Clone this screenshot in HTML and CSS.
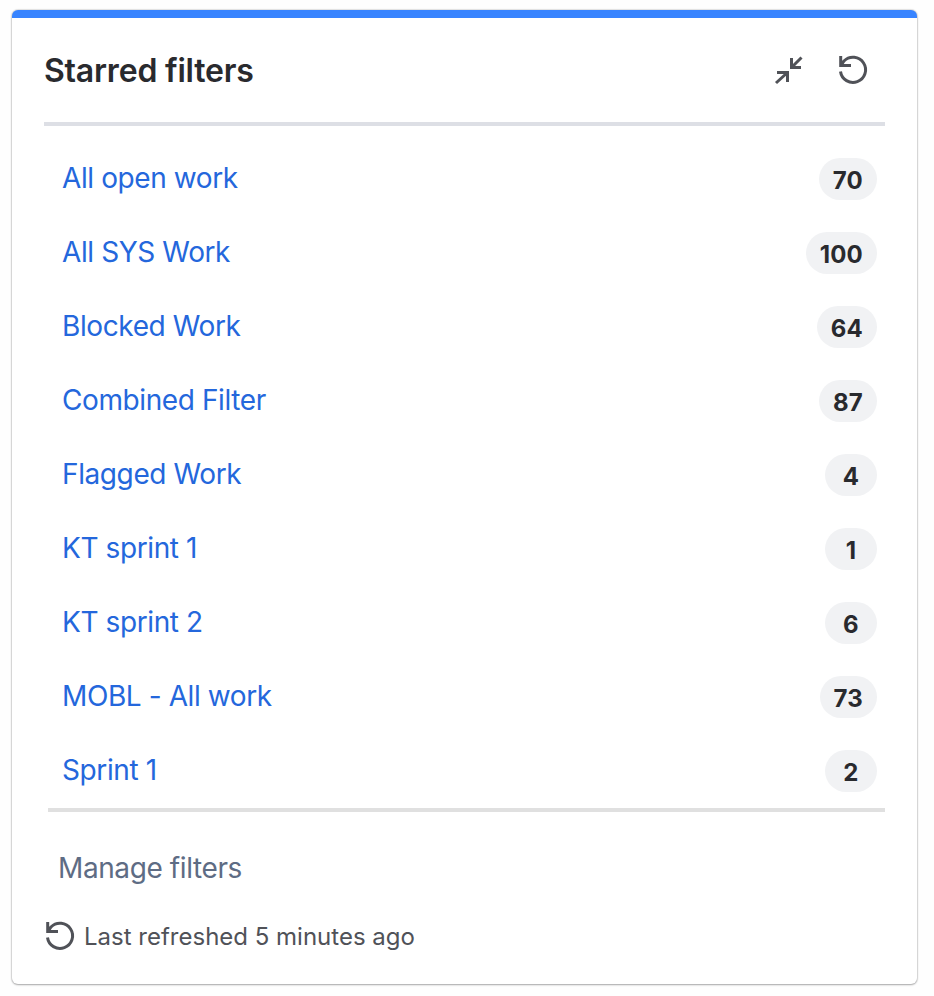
FILE: index.html
```html
<!DOCTYPE html>
<html lang="en">
<head>
    <meta charset="UTF-8">
    <meta name="viewport" content="width=device-width, initial-scale=1.0">
    <link rel="stylesheet" href="styles.css">
    <title>Starred filters</title>
</head>
<body>
    <div class="gadget">
        <div class="header">
            <h1>Starred filters</h1>
            <div class="actions">
                <svg class="icon" viewBox="0 0 32 32">
                    <path d="M18.5 4v9.5H28M18.5 13.5L28.5 3.5" />
                    <path d="M4 18.5h10.5V28M14.5 18.5L3 29" />
                </svg>
                <svg class="icon" viewBox="0 0 32 32">
                    <path d="M3.7 2v9.5H14M4 11.5L7 7A12.6 12.6 0 1 1 3.5 17.5" />
                </svg>
            </div>
        </div>
        <div class="list">
            <div class="row"><a class="name">All open work</a><span class="count">70</span></div>
            <div class="row"><a class="name">All SYS Work</a><span class="count">100</span></div>
            <div class="row"><a class="name">Blocked Work</a><span class="count">64</span></div>
            <div class="row"><a class="name">Combined Filter</a><span class="count">87</span></div>
            <div class="row"><a class="name">Flagged Work</a><span class="count">4</span></div>
            <div class="row"><a class="name">KT sprint 1</a><span class="count">1</span></div>
            <div class="row"><a class="name">KT sprint 2</a><span class="count">6</span></div>
            <div class="row"><a class="name">MOBL - All work</a><span class="count">73</span></div>
            <div class="row"><a class="name">Sprint 1</a><span class="count">2</span></div>
        </div>
        <a class="manage">Manage filters</a>
        <div class="refreshed">
            <svg class="icon" viewBox="0 0 32 32">
                <path d="M3.7 2v9.5H14M4 11.5L7 7A12.6 12.6 0 1 1 3.5 17.5" />
            </svg>
            <span>Last refreshed 5 minutes ago</span>
        </div>
    </div>
</body>
</html>
```

FILE: styles.css
```css
body {
    margin: 0;
    padding: 10px 17px 12px 12px;
    background-color: #fefefe;
    font-family: 'Inter', 'Liberation Sans', sans-serif;
}

.gadget {
    box-sizing: border-box;
    height: 974px;
    padding: 0 32px;
    border-top: 8px solid #3884ff;
    border-radius: 6px;
    background-color: #fff;
    box-shadow: 0 1px 2px rgba(30, 31, 33, 0.3), 0 0 1px 1px rgba(30, 31, 33, 0.12);
}

.header {
    display: flex;
    justify-content: space-between;
    align-items: center;
    height: 104px;
    border-bottom: 4px solid #dddfe5;
}

h1 {
    margin: 0;
    font-size: 32px;
    font-weight: 600;
    letter-spacing: -0.2px;
    color: #292a2e;
}

.actions {
    display: flex;
    gap: 32px;
    margin-right: 16px;
}

.icon {
    width: 32px;
    height: 32px;
    fill: none;
    stroke: #505258;
    stroke-width: 3;
}

.list {
    margin-left: 4px;
    padding-top: 16px;
    border-bottom: 4px solid #e0e0e0;
}

.row {
    display: flex;
    justify-content: space-between;
    align-items: center;
    height: 74px;
    padding: 0 8px 0 14px;
}

.name {
    padding-bottom: 2px;
    font-size: 28px;
    letter-spacing: -0.4px;
    color: #2467dc;
}

.count {
    box-sizing: border-box;
    min-width: 52px;
    height: 42px;
    padding: 2px 14px 0;
    border-radius: 21px;
    background-color: #f1f2f4;
    font-size: 24px;
    font-weight: 700;
    line-height: 42px;
    letter-spacing: 0.2px;
    text-align: center;
    color: #292a2e;
}

.manage {
    display: block;
    margin: 36px 0 0 14px;
    font-size: 28px;
    line-height: 40px;
    letter-spacing: -0.4px;
    color: #5e6c84;
}

.refreshed {
    display: flex;
    align-items: center;
    gap: 8px;
    margin-top: 32px;
    font-size: 24px;
    color: #505258;
}
```
